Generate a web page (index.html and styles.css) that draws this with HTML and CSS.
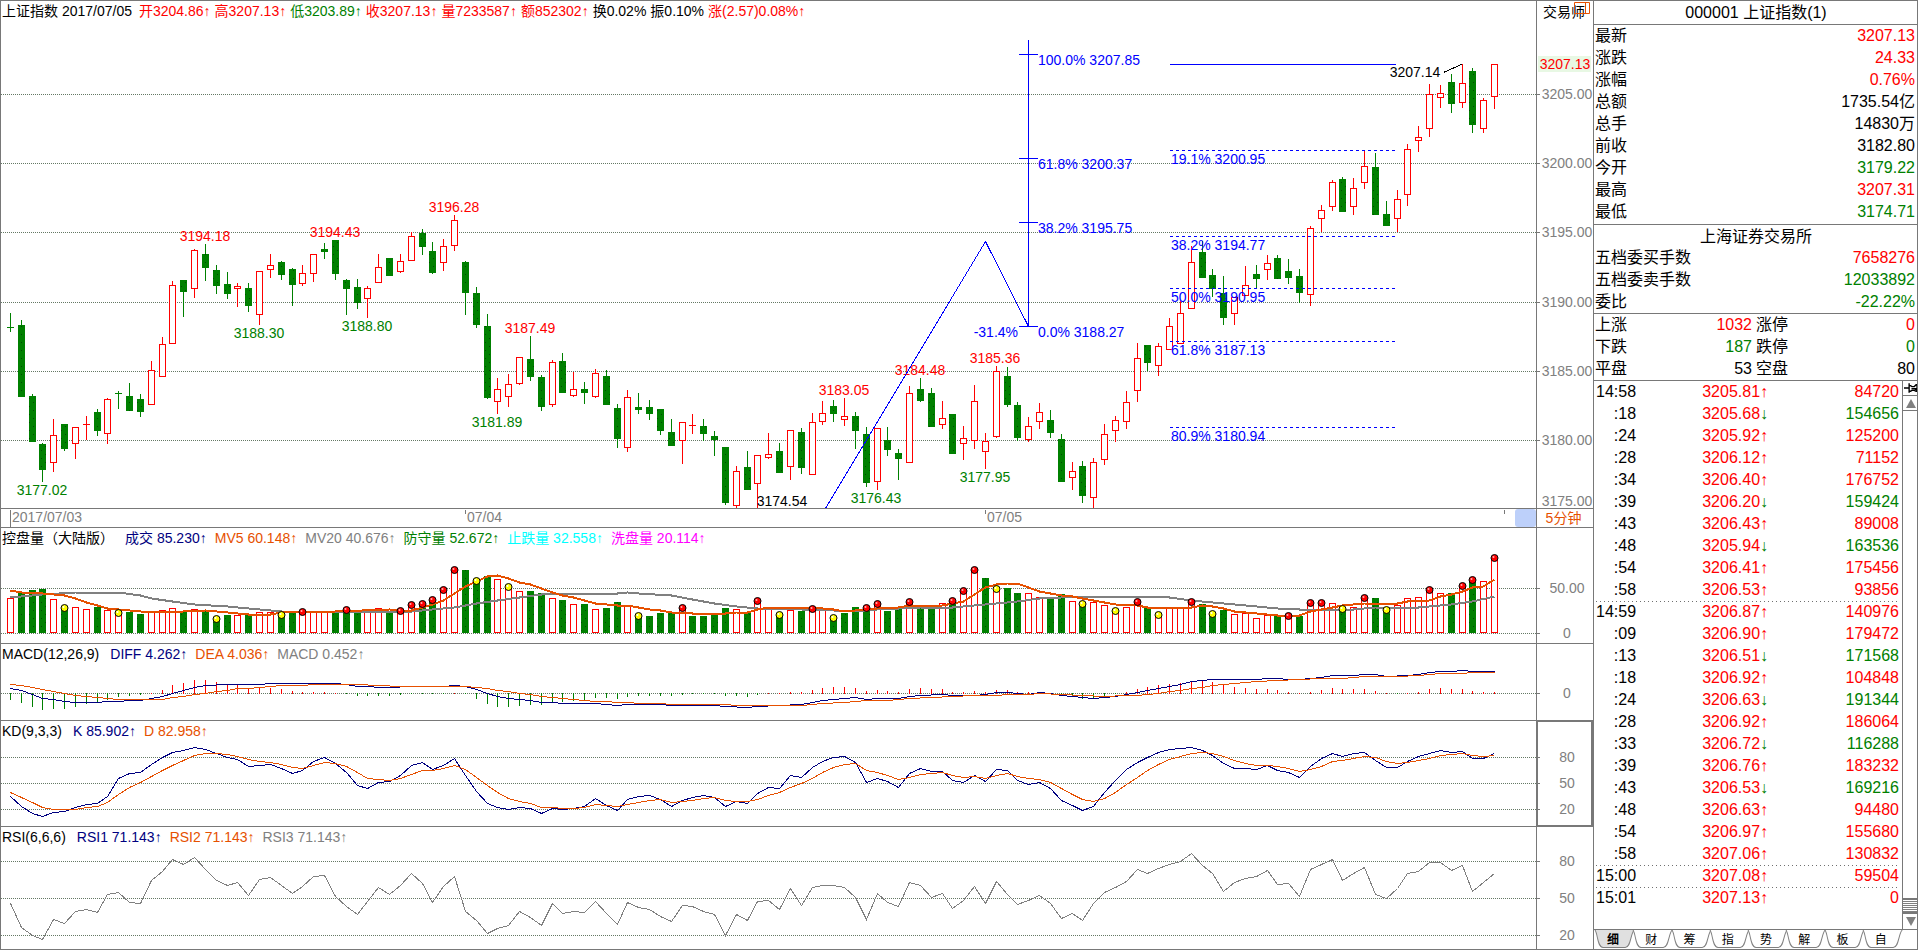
FILE: index.html
```html
<!DOCTYPE html>
<html lang="zh-CN">
<head>
<meta charset="utf-8">
<title>上证指数 000001</title>
<link rel="stylesheet" href="styles.css">
</head>
<body>
<div class="terminal">
  <main class="charts">
    <section class="panel" id="price" aria-label="K线">
      <svg class="plot"></svg>
      <header class="legend legend-main">
        <span class="symbol">上证指数 2017/07/05</span>
        <span class="up">开3204.86↑</span><span class="up">高3207.13↑</span><span class="down">低3203.89↑</span><span class="up">收3207.13↑</span><span class="up">量7233587↑</span><span class="up">额852302↑</span><span>换0.02%</span><span>振0.10%</span><span class="up">涨(2.57)0.08%↑</span>
      </header>
      <div class="brand">交易师
        <svg class="brand-icon" width="16" height="12" viewBox="0 0 16 12"><path d="M.5 .5H15.5V11.5H.5ZM11.5 .5V11.5"/></svg>
      </div>
    </section>
    <section class="panel" id="dates" aria-label="日期">
      <svg class="plot"></svg>
      <div class="date-thumb"></div>
      <button class="period" type="button">5分钟</button>
    </section>
    <section class="panel" id="volume" aria-label="成交量">
      <svg class="plot"></svg>
      <header class="legend">
        <span class="name">控盘量（大陆版）</span><span class="navy">成交 85.230↑</span><span class="orange">MV5 60.148↑</span><span class="gray">MV20 40.676↑</span><span class="down">防守量 52.672↑</span><span class="cyan">止跌量 32.558↑</span><span class="magenta">洗盘量 20.114↑</span>
      </header>
    </section>
    <section class="panel" id="macd" aria-label="MACD">
      <svg class="plot"></svg>
      <header class="legend">
        <span class="name">MACD(12,26,9)</span><span class="navy">DIFF 4.262↑</span><span class="orange">DEA 4.036↑</span><span class="gray">MACD 0.452↑</span>
      </header>
    </section>
    <section class="panel" id="kd" aria-label="KD">
      <svg class="plot"></svg>
      <header class="legend">
        <span class="name">KD(9,3,3)</span><span class="navy">K 85.902↑</span><span class="orange">D 82.958↑</span>
      </header>
      <div class="axis-focus"></div>
    </section>
    <section class="panel" id="rsi" aria-label="RSI">
      <svg class="plot"></svg>
      <header class="legend">
        <span class="name">RSI(6,6,6)</span><span class="navy">RSI1 71.143↑</span><span class="orange">RSI2 71.143↑</span><span class="gray">RSI3 71.143↑</span>
      </header>
    </section>
  </main>

  <aside class="quote">
    <h1 class="quote-title">000001 上证指数(1)</h1>
    <dl class="facts">
      <div><dt>最新</dt><dd class="up">3207.13</dd></div>
      <div><dt>涨跌</dt><dd class="up">24.33</dd></div>
      <div><dt>涨幅</dt><dd class="up">0.76%</dd></div>
      <div><dt>总额</dt><dd>1735.54亿</dd></div>
      <div><dt>总手</dt><dd>14830万</dd></div>
      <div><dt>前收</dt><dd>3182.80</dd></div>
      <div><dt>今开</dt><dd class="down">3179.22</dd></div>
      <div><dt>最高</dt><dd class="up">3207.31</dd></div>
      <div><dt>最低</dt><dd class="down">3174.71</dd></div>
    </dl>
    <section class="exchange">
      <h2>上海证券交易所</h2>
      <dl class="facts plain">
        <div><dt>五档委买手数</dt><dd class="up">7658276</dd></div>
        <div><dt>五档委卖手数</dt><dd class="down">12033892</dd></div>
        <div><dt>委比</dt><dd class="down">-22.22%</dd></div>
      </dl>
    </section>
    <dl class="facts breadth">
      <div><dt>上涨</dt><dd class="up">1032</dd></div><div><dt>涨停</dt><dd class="up">0</dd></div>
      <div><dt>下跌</dt><dd class="down">187</dd></div><div><dt>跌停</dt><dd class="down">0</dd></div>
      <div><dt>平盘</dt><dd>53</dd></div><div><dt>空盘</dt><dd>80</dd></div>
    </dl>
    <div class="ticks">
      <div class="tick-list">
        <table class="tick-table"><tbody id="ticks"></tbody></table>
      </div>
      <div class="scroll">
        <button type="button" aria-label="固定"><svg width="14" height="12" viewBox="0 0 15 12"><path d="M0 6H5M5.500 1V11M5.500 3.500H7L8.500 4.500H11L13 2.500H14V9.500H13L11 8.500H8.500L7 9.500H5.500" fill="none" stroke="#000" stroke-width="1.500"/><path d="M8 6H14V9H13L11 7.500H8Z"/></svg></button>
        <button type="button" aria-label="向上"><svg width="10" height="9" viewBox="0 0 10 9"><path d="M5 0L10 9H0Z" fill="#808080"/></svg></button>
        <div class="track"><div class="thumb"></div></div>
        <button type="button" aria-label="向下"><svg width="10" height="9" viewBox="0 0 10 9"><path d="M5 9L10 0H0Z" fill="#808080"/></svg></button>
      </div>
    </div>
    <nav class="tabs" id="tabs"></nav>
  </aside>
</div>
<script src="chart.js"></script>
</body>
</html>
```
FILE: styles.css
```css
* { box-sizing: border-box; }

:root {
  --line: #787878;
  --up: #ff0000;
  --down: #008000;
  --navy: #000080;
  --orange: #e65000;
  --gray: #808080;
  --axis: 57px;
}

html, body { height: 100%; }

body {
  margin: 0;
  background: #fff;
  color: #000;
  font: 14px/16px "Liberation Sans", "Noto Sans CJK SC", sans-serif;
}

button {
  margin: 0;
  padding: 0;
  border: 0;
  background: none;
  color: inherit;
  font: inherit;
}

.terminal {
  display: flex;
  height: 100vh;
  outline: 1px solid var(--line);
  outline-offset: -1px;
  border-bottom: 1px solid #000;
  overflow: hidden;
}

.up { color: var(--up); }
.down { color: var(--down); }
.navy { color: var(--navy); }
.orange { color: var(--orange); }
.gray { color: var(--gray); }
.cyan { color: #00ffff; }
.magenta { color: #ff00ff; }

/* Charts */
.charts {
  flex: 1;
  min-width: 0;
  display: grid;
  grid-template-rows: minmax(0, 509fr) 19px minmax(0, 116fr) minmax(0, 77fr) minmax(0, 106fr) minmax(0, 122fr);
}

.panel {
  position: relative;
  border-bottom: 1px solid var(--line);
}

#rsi { border-bottom: 0; }

.plot {
  position: absolute;
  inset: 0;
  width: 100%;
  height: 100%;
}

.legend {
  position: relative;
  display: flex;
  gap: 8px;
  padding: 2px 60px 0 2px;
  white-space: nowrap;
}

.legend .name { margin-right: 3px; }

.legend-main {
  gap: 4px;
  padding-top: 3px;
}

.legend-main .symbol { margin-right: 3px; }

.brand {
  position: absolute;
  top: 4px;
  right: 0;
  width: var(--axis);
  padding-left: 7px;
}

.brand-icon {
  position: absolute;
  top: -2px;
  right: 3px;
}

.brand-icon path {
  fill: none;
  stroke: var(--orange);
}

.period {
  position: absolute;
  inset: 0 0 0 auto;
  width: var(--axis);
  padding-right: 2px;
  color: var(--orange);
}

.date-thumb {
  position: absolute;
  inset: 0 var(--axis) 0 auto;
  width: 21px;
  border-radius: 3px;
  background: #bdd0fa;
}

.axis-focus {
  position: absolute;
  inset: -1px 0 -1px auto;
  width: var(--axis);
  border: 2px solid var(--line);
}

.plot text { font-size: 14px; white-space: pre; }
.plot .wick, .plot .rule, .plot .grid, .plot .body, .plot .curve { shape-rendering: crispEdges; fill: none; }
.plot .grid { stroke: #647864; stroke-dasharray: 1 1; }
.plot .rule { stroke: var(--line); }
.plot .wick.up, .plot .body.up { stroke: var(--up); }
.plot .wick.down { stroke: var(--down); }
.plot .body.up { fill: #fff; }
.plot .body.down { fill: url(#hatch); }
.plot .fill-up { fill: var(--up); }
.plot .fill-down { fill: var(--down); }
.plot .fill-gray { fill: var(--gray); }
.plot .fill-blue { fill: #0000ff; }
.plot .fill-black { fill: #000; }
.plot .blue { stroke: #0000ff; }
.plot .dashed { stroke-dasharray: 3 3; }
.plot .black { stroke: #000; }
.plot .curve.navy { stroke: var(--navy); }
.plot .curve.orange { stroke: var(--orange); }
.plot .curve.gray { stroke: var(--gray); }
.plot .curve.bold { stroke-width: 2; }
.plot .last { fill: #e8f8e4; }

/* Quote */
.quote {
  width: 325px;
  display: flex;
  flex-direction: column;
  border-left: 1px solid var(--line);
  font-size: 16px;
  line-height: 22px;
}

.quote h1, .quote h2 {
  margin: 0;
  font-size: 16px;
  font-weight: 400;
  text-align: center;
}

.quote-title {
  padding: 2px 0 0;
  border-bottom: 1px solid var(--line);
}

.exchange { padding-top: 2px; }
.exchange h2 { line-height: 20px; }

.facts {
  margin: 0;
  padding-bottom: 1px;
  border-bottom: 1px solid var(--line);
}

.facts > div {
  display: flex;
  justify-content: space-between;
  padding: 0 3px 0 1px;
}

.facts dd { margin: 0; }

.facts.plain { padding-bottom: 0; }

.breadth {
  display: grid;
  grid-template-columns: 161fr 163fr;
  padding-bottom: 0;
}

.ticks {
  flex: 1;
  min-height: 0;
  display: flex;
  border-bottom: 1px solid var(--line);
}

.tick-list {
  flex: 1;
  overflow: hidden;
  padding: 0 3px 0 2px;
}

.tick-table {
  width: 100%;
  border-spacing: 0;
}

.tick-table td {
  height: 22px;
  padding: 0;
  text-align: right;
}

.tick-table .time { width: 40px; }
.tick-table .price { width: 124px; }
.tick-table .arrow { width: 8px; }
.tick-table .mark { background: repeating-linear-gradient(90deg, #707070 0 1px, #fff 1px 4px) top / 100% 1px no-repeat; }

.scroll {
  width: 16px;
  display: flex;
  flex-direction: column;
  border-left: 1px solid var(--line);
}

.scroll button {
  height: 15px;
  display: grid;
  place-items: center;
  border-bottom: 1px solid var(--line);
}

.scroll button:last-child { border-bottom: 0; }

.track {
  flex: 1;
  display: flex;
  align-items: flex-end;
}

.thumb {
  width: 100%;
  height: 16px;
  border: solid var(--line);
  border-width: 2px 0;
  background: repeating-linear-gradient(#fff 0 1px, #808080 1px 2px);
}

.tabs {
  display: flex;
  height: 19px;
  padding-right: 18px;
}

.tab {
  position: relative;
  flex: 1;
  font-size: 12px;
  line-height: 18px;
}

.tab svg {
  position: absolute;
  top: 0;
  left: 0;
  width: calc(100% + 3px);
  height: 19px;
}

.tab path { fill: #fff; stroke: #808080; }
.tab span { position: relative; }
.tab.active { font-weight: 700; }
.tab.active path { fill: #e0e0e0; }
```
FILE: chart.js
```js
const NS = 'http://www.w3.org/2000/svg';
const AXIS = 57;
const BASE_WIDTH = 1536;
const STEP = 10.833;

/* One candle each: direction, body top, body bottom, high, low */
const candles = `
g327,328,313,332 g325,397,320,397 g396,442,394,442 g444,470,443,482 r435,462,419,472 g424,449,424,451
r427,443,427,459 r424,425,416,440 g412,431,409,436 r399,433,398,444 g393,394,391,409 g396,411,383,411
g399,412,394,417 r370,404,361,405 r344,376,337,376 r285,343,281,343 g280,292,280,317 r250,288,249,298
g254,268,244,281 g270,286,265,294 g284,294,272,299 r286,288,283,307 g288,306,283,312 r271,314,271,325
r265,269,254,278 g262,275,261,280 g269,285,268,306 r273,283,265,286 r254,273,254,282 g249,252,243,259
g240,274,240,280 g280,289,279,315 g287,303,279,309 r288,298,286,318 r267,282,254,283 g258,276,258,276
r261,271,254,273 r236,260,232,261 g233,247,229,255 g251,273,242,274 r246,262,239,271 r220,245,215,251
g262,293,261,315 g293,325,287,328 g326,398,314,399 r389,401,378,414 r384,396,374,407 r357,383,357,385
g359,377,336,381 g377,407,375,411 r362,404,360,407 g361,393,353,393 r389,395,372,397 g389,393,382,404
r373,396,369,398 g376,405,370,405 g408,439,404,448 r397,447,390,452 g407,410,393,414 g407,414,400,420
g409,431,409,435 g432,446,419,446 r422,440,422,464 r425,426,414,434 g426,434,419,441 g436,440,431,456
g447,503,447,505 r471,505,466,508 g467,490,451,490 r455,483,455,508 r454,457,433,459 g451,473,443,473
r430,466,430,480 g432,468,428,474 r422,474,413,474 r413,421,401,425 g406,414,400,422 r416,419,398,426
g416,431,412,449 g434,483,427,487 r428,481,428,490 g440,450,427,456 g453,459,449,480 r393,462,386,463
g389,401,378,402 g393,427,388,427 r418,424,401,429 g414,454,414,454 r438,443,426,460 r401,440,385,449
r441,451,433,469 r371,436,366,438 g376,405,367,407 g405,438,402,441 r426,439,417,442 r412,421,403,429
g420,433,410,438 g439,482,434,482 r471,477,462,490 g466,496,461,503 r462,497,458,508 r434,459,424,465
r420,430,416,442 r402,421,391,429 r358,390,343,402 g345,363,345,371 r346,365,343,376 r326,349,318,349
r313,343,300,343 r262,308,246,308 g252,278,241,278 g275,289,269,297 g293,318,276,325 r297,313,297,325
r285,295,266,296 g274,279,265,288 r263,269,255,280 g258,279,255,279 g271,278,259,284 g276,293,269,303
r228,294,226,306 r210,218,205,232 r182,206,180,211 g179,212,177,212 r188,206,178,215 r166,182,151,189
g167,215,153,215 g214,226,201,226 r199,218,190,232 r149,194,144,206 r137,140,126,152 r94,128,84,137
r93,97,85,108 g82,104,74,113 r83,102,64,108 g71,125,68,133 r100,128,98,133 r64,96,64,109
`.trim().split(/\s+/).map(s => [s[0], ...s.slice(1).split(',').map(Number)]);

/* Indicator levels are in thirds of a pixel below this line */
const LEVEL_TOP = 515;
const level = v => LEVEL_TOP + v / 3;

/* Volume: direction, level, optional marker (R red ball, Y yellow ball) */
const volumes = `
r250 g234 g225 g222 r253 g279Y r277 r283 g276 r286 r294Y g291 g297 r290 r286 r280 g290 r283 g288 g312Y
g300 r301 g300 r292 r292 g300Y g291 r291R r291 r291 g291 g285R g291 r286 r280 g288 r288R r270R g267R g255R
r225R r165R g165 g198Y g183 r193 r216Y r229 g228 g234 r250 g255 r268 g267 r283 g279 g261 r271 g303Y g303
g294 g292 r279R g303 g303 g295 g279 r283 g291 r258R r283 g300Y r286 g288 r282R r286 g309Y g294 g276 g279R
r267R g288 g280 r261R g276 g276 r265 g258R r228R r165R g189 r222Y g219 g234 r235 r247 g250 g237 r259 g267Y
r262 r271 r288Y r277 r261R g279 r300Y r280 r280 r261R g267 g297Y g285 r298 r295 r310 r300 g303 r303R g303
r264R r264R r265 g282Y r277 r249R g249 g285Y r271 r250 r247 r225R r235 g234 r213R g195R r199 r129R
`.trim().split(/\s+/);

const list = s => s.trim().split(/\s+/).map((v, i) => [i, Number(v)]);
const pairs = s => s.trim().split(/\s+/).map(p => p.split(':').map(Number));

const mv5 = pairs(`0:227 1:232 3:234 4:238 5:240 6:250 7:262 8:270 9:280 10:283 11:286 12:288 14:291 16:288 18:286 20:291
22:297 24:297 25:292 30:289 35:283 36:286 37:286 38:276 39:268 40:257 41:234 42:213 43:200 44:184 45:180 46:190 47:202
48:208 49:219 50:231 51:241 52:247 53:256 54:265 55:269 56:270 57:272 58:276 59:283 60:286 61:291 63:294 66:294 67:291
68:291 69:282 70:278 74:278 76:283 77:288 79:284 80:280 82:276 83:270 85:274 86:271 87:265 88:260 89:237 90:217 91:207
92:204 93:204 94:218 95:228 97:240 98:244 99:250 100:256 101:262 102:269 104:270 105:276 109:276 110:272 111:275
112:279 113:289 115:296 117:300 119:300 120:288 121:282 122:276 123:271 125:265 128:264 129:260 131:255 132:245
133:238 134:230 135:217 136:213 137:192`);

const mv20 = pairs(`0:246 2:240 3:237 6:232 10:233 12:241 13:250 15:259 17:267 20:274 23:284 25:288 30:290 35:288 37:288
39:282 41:276 43:265 45:255 47:246 49:239 51:234 56:234 57:231 58:234 61:241 63:254 65:265 67:274 69:279 73:283 76:286
78:288 80:283 84:278 87:278 89:271 91:265 93:258 95:250 97:246 99:243 106:243 107:247 109:255 111:262 113:268 115:275
117:281 119:282 124:282 126:278 130:278 132:270 133:268 135:260 137:245`);

const macdBars = list(`555 564 576 585 582 582 576 567 564 556 546 543 539 534 525 510 504 495 495 501 507 510 519 518
519 522 528 531 531 531 533 537 543 543 543 543 540 536 537 538 537 533 537 552 567 576 576 573 570 570 564 561 558 556
549 549 552 546 543 543 543 543 540 537 537 537 543 543 546 540 535 535 531 531 525 519 516 516 519 528 525 528 531 522
519 522 522 531 531 528 531 525 525 531 532 531 534 541 545 552 549 543 537 531 522 516 510 507 504 498 496 501 510 516
519 522 522 525 531 535 531 525 519 522 522 522 528 535 537 533 531 522 519 522 522 528 531 531`);

const diff = pairs(`0:520 1:526 2:537 3:550 4:553 5:559 6:562 8:562 9:559 12:556 13:550 14:544 15:535 16:526 17:517
18:511 20:508 23:508 24:505 30:505 31:508 32:514 35:517 37:514 40:514 41:511 42:515 43:523 44:535 45:544 46:550 47:553
48:556 49:562 50:563 51:566 54:566 55:567 56:571 57:568 60:568 61:571 65:571 66:574 68:577 69:574 71:571 73:568 74:562
75:556 76:553 77:550 78:547 79:553 80:550 82:550 83:544 84:541 86:538 87:541 89:541 90:538 91:532 92:532 93:535 94:537
95:532 96:535 97:541 98:545 99:548 100:551 101:547 102:544 103:538 104:532 105:526 106:520 107:514 108:508 109:500
110:496 111:493 115:493 116:490 117:490 118:493 119:493 120:490 121:487 122:481 124:481 125:478 126:478 127:484
129:481 130:478 131:472 132:469 133:469 134:466 135:469 137:469`);

const dea = pairs(`0:508 1:511 2:517 3:523 4:529 5:535 6:541 7:544 8:547 9:550 10:553 14:553 15:547 16:544 17:538 18:535
19:529 20:526 21:520 22:520 24:514 25:511 30:508 32:508 34:511 36:514 42:514 43:517 44:520 45:526 46:529 47:534 48:538
49:544 50:547 51:550 52:553 53:556 54:559 55:559 56:562 59:565 62:568 66:568 67:571 73:571 74:568 75:565 77:562 79:556
81:556 82:553 83:550 85:547 87:544 89:541 91:541 92:538 94:538 95:535 97:537 99:541 101:544 103:541 104:541 105:538
106:534 107:529 108:526 109:520 110:517 111:511 112:508 113:505 115:499 117:496 119:493 121:490 123:489 125:484
128:484 130:482 132:475 134:475 135:472 137:472`);

const kLine = list(`844 875 894 905 893 889 877 869 865 844 791 775 772 747 727 712 706 698 704 715 727 734 754 751 748
759 775 766 738 727 745 772 810 820 803 798 781 751 742 763 750 731 781 829 865 878 883 877 881 895 880 884 881 874 850
870 885 853 844 841 854 873 856 847 841 846 874 859 865 835 817 821 781 787 757 739 727 724 742 802 790 799 817 776 760
769 769 796 802 782 799 763 766 796 808 802 819 856 871 886 873 832 795 763 742 728 711 703 700 697 706 720 745 760 760
763 752 766 772 788 755 731 715 723 715 712 736 757 757 738 724 715 706 712 709 729 730 715`);

const dLine = list(`832 847 862 878 884 884 884 878 874 861 838 818 802 784 767 750 735 722 715 715 718 724 734 739 742
748 757 760 751 742 745 755 771 790 793 797 790 778 766 765 759 751 762 786 812 832 850 859 866 877 878 881 880 878 868
871 874 868 862 857 853 862 858 856 850 847 856 859 859 853 841 832 817 805 790 773 757 749 745 766 772 781 793 787 778
774 772 782 787 785 790 781 776 785 790 793 802 821 838 853 859 850 833 808 787 766 749 733 724 715 712 715 725 736 745
751 751 755 761 769 763 755 739 736 730 724 728 738 745 742 736 730 721 718 715 721 724 721`);

const rsiLine = list(`1164 1237 1260 1273 1213 1225 1190 1184 1192 1139 1132 1161 1165 1096 1069 1033 1048 1028 1063 1096
1111 1102 1140 1094 1087 1112 1135 1114 1085 1081 1144 1173 1197 1158 1118 1137 1112 1075 1104 1161 1113 1085 1189 1216
1255 1240 1231 1189 1208 1230 1165 1195 1189 1192 1159 1195 1227 1162 1177 1184 1204 1219 1171 1175 1190 1198 1262 1198
1215 1160 1156 1183 1120 1171 1117 1111 1111 1117 1146 1213 1136 1162 1174 1102 1111 1148 1135 1180 1157 1114 1164 1100
1138 1168 1156 1140 1165 1211 1195 1216 1166 1133 1117 1099 1063 1076 1061 1049 1039 1016 1050 1075 1129 1103 1090 1083
1066 1108 1105 1144 1063 1048 1033 1096 1076 1058 1137 1150 1120 1076 1069 1043 1042 1066 1050 1129 1103 1076`);

function painter(id, top, height) {
  const panel = document.getElementById(id);
  const svg = panel.querySelector('.plot');
  svg.replaceChildren();
  const width = panel.clientWidth - AXIS;
  const sx = width / BASE_WIDTH;
  const sy = panel.offsetHeight / height;
  const X = x => Math.floor(x * sx);
  const Y = y => Math.round((y - top) * sy);
  const add = (tag, cls, attrs, text) => {
    const el = document.createElementNS(NS, tag);
    el.setAttribute('class', cls);
    for (const k in attrs) el.setAttribute(k, attrs[k]);
    if (text) el.textContent = text;
    svg.append(el);
    return el;
  };
  const px = i => X(10.4 + STEP * i);
  const line = (cls, points) => add('polyline', cls, {
    points: points.map(([x, y]) => `${X(x) + 0.5},${Y(y) + 0.5}`).join(' ')
  });
  const curve = (cls, points) => add('polyline', 'curve ' + cls, {
    points: points.map(([i, v]) => `${px(i) + 0.5},${Y(Math.floor(level(v))) + 0.5}`).join(' ')
  });
  const text = (cls, x, y, s, anchor = 'start') =>
    add('text', cls, { x: X(x), y: Y(y) + 5, 'text-anchor': anchor }, s);
  const grid = y => add('path', 'grid', { d: `M1 ${Y(y) + 0.5}H${width}` });
  const axis = (y, s, labelY = y) => {
    add('path', 'rule', { d: `M${width} ${Y(y) + 0.5}h4` });
    add('text', 'fill-gray', { x: width + 31, y: Y(labelY) + 5, 'text-anchor': 'middle' }, s);
  };
  const body = (dir, x, y1, y2) => {
    if (dir === 'g') add('rect', 'body down', { x: x - 3, y: y1, width: 7, height: Math.max(1, y2 - y1) });
    else if (y2 - y1 < 2) add('path', 'wick up', { d: `M${x - 3} ${y1 + 0.5}h7` });
    else add('rect', 'body up', { x: x - 2.5, y: y1 + 0.5, width: 6, height: y2 - y1 });
  };
  add('path', 'rule', { d: `M${width + 0.5} 0V${panel.offsetHeight}` });
  return { add, px, X, Y, line, curve, text, grid, axis, body, width };
}

function drawPrice() {
  const p = painter('price', 0, 509);
  const defs = p.add('defs', '', {});
  defs.innerHTML = '<pattern id="hatch" width="8" height="8" patternUnits="userSpaceOnUse"><rect width="8" height="8" fill="#008000"/><path d="M1 2h1v1h-1zM5 6h1v1h-1z" fill="#004c00"/></pattern>';
  [94, 163, 232, 302, 371, 440].forEach((y, i) => {
    p.grid(y);
    p.axis(y, (3205 - 5 * i).toFixed(2));
  });
  p.add('text', 'fill-gray', { x: p.width + 31, y: p.Y(501) + 5, 'text-anchor': 'middle' }, '3175.00');
  p.add('rect', 'last', { x: p.width + 2, y: p.Y(64) - 8, width: 53, height: 16 });
  p.add('text', 'fill-up', { x: p.width + 29, y: p.Y(64) + 5, 'text-anchor': 'middle' }, '3207.13');

  candles.forEach(([dir, top, bottom, high, low], i) => {
    const x = p.px(i);
    const wick = dir === 'r' ? 'wick up' : 'wick down';
    p.add('path', wick, { d: `M${x + 0.5} ${p.Y(high)}V${p.Y(low)}` });
    p.body(dir, x, p.Y(top), p.Y(bottom));
  });
  /* Flat opening bar keeps its full-height wick and a wide tick */
  [[0, 327], [10, 393]].forEach(([i, y]) => p.add('path', 'wick down', { d: `M${p.px(i) - 3} ${p.Y(y) + 0.5}h7` }));

  [['up', 205, 236, '3194.18'], ['down', 259, 333, '3188.30'], ['up', 335, 232, '3194.43'], ['down', 367, 326, '3188.80'],
   ['up', 454, 207, '3196.28'], ['down', 42, 490, '3177.02'], ['down', 497, 422, '3181.89'], ['up', 530, 328, '3187.49'],
   ['black', 782, 501, '3174.54'], ['up', 844, 390, '3183.05'], ['down', 876, 498, '3176.43'], ['up', 920, 370, '3184.48'],
   ['up', 995, 358, '3185.36'], ['down', 985, 477, '3177.95'], ['black', 1415, 72, '3207.14']]
    .forEach(([c, x, y, s]) => p.text('fill-' + c, x, y, s, 'middle'));
  p.line('curve black', [[1443, 72], [1461, 64]]);

  p.line('curve blue', [[825, 508], [985, 241], [1028, 326]]);
  p.line('curve blue', [[1028, 39], [1028, 326]]);
  [[54, '100.0% 3207.85'], [158, '61.8% 3200.37'], [222, '38.2% 3195.75'], [326, '0.0% 3188.27']].forEach(([y, s]) => {
    p.line('curve blue', [[1018, y], [1037, y]]);
    p.text('fill-blue', 1038, y + 6, s);
  });
  p.text('fill-blue', 1018, 332, '-31.4%', 'end');
  p.line('curve blue', [[1169, 64], [1395, 64]]);
  [[150, '19.1% 3200.95'], [236, '38.2% 3194.77'], [288, '50.0% 3190.95'], [341, '61.8% 3187.13'], [427, '80.9% 3180.94']].forEach(([y, s]) => {
    p.line('curve blue dashed', [[1169, y], [1395, y]]);
    p.text('fill-blue', 1171, y + 9, s);
  });
}

function drawDates() {
  const p = painter('dates', 0, 19);
  p.line('curve rule', [[10, 0], [10, 19]]);
  [465, 985, 1504].forEach(x => p.line('curve rule', [[x, 0], [x, 4]]));
  p.text('fill-gray', 12, 8, '2017/07/03');
  p.text('fill-gray', 467, 8, '07/04');
  p.text('fill-gray', 987, 8, '07/05');
}

function drawVolume() {
  const p = painter('volume', 528, 116);
  [[588, '50.00'], [633, '0']].forEach(([y, s]) => { p.grid(y); p.axis(y, s); });
  const bars = volumes.map(s => ({ dir: s[0], y: level(parseInt(s.slice(1), 10)), ball: s[4] }));
  bars.forEach((b, i) => p.body(b.dir, p.px(i), p.Y(Math.floor(b.y)), p.Y(b.dir === 'g' ? 633 : 632)));
  p.curve('gray bold', mv20);
  p.curve('orange bold', mv5);
  bars.forEach((b, i) => {
    if (!b.ball) return;
    const cx = p.px(i) + 0.5, cy = p.Y(Math.round(b.y));
    p.add('circle', 'ball', { cx, cy, r: 3.5, fill: b.ball === 'R' ? '#ff0000' : '#ffff00', stroke: '#000' });
    p.add('circle', 'shine', { cx: cx - 1, cy: cy - 1, r: 1, fill: b.ball === 'R' ? '#ffb0b0' : '#ffffff' });
  });
}

function drawMacd() {
  const p = painter('macd', 644, 77);
  p.grid(693);
  p.axis(693, '0');
  macdBars.forEach(([i, v]) => {
    const y = Math.round(level(v)), up = v < 536;
    p.add('path', up ? 'wick up' : 'wick down', { d: `M${p.px(i) + 0.5} ${p.Y(up ? y : 693)}V${p.Y(up ? 694 : y)}` });
  });
  p.curve('navy', diff);
  p.curve('orange', dea);
}

function drawKd() {
  const p = painter('kd', 721, 106);
  [[757, '80'], [783, '50'], [809, '20']].forEach(([y, s]) => { p.grid(y); p.axis(y, s); });
  p.curve('navy', kLine);
  p.curve('orange', dLine);
}

function drawRsi() {
  const p = painter('rsi', 827, 122);
  [[861, '80'], [898, '50'], [935, '20']].forEach(([y, s]) => { p.grid(y); p.axis(y, s); });
  p.curve('gray', rsiLine);
}

function draw() {
  drawPrice();
  drawDates();
  drawVolume();
  drawMacd();
  drawKd();
  drawRsi();
}

const ticks = `14:58 3205.81 84720 +|:18 3205.68 154656 -|:24 3205.92 125200 +|:28 3206.12 71152 +|:34 3206.40 176752 +
:39 3206.20 159424 -|:43 3206.43 89008 +|:48 3205.94 163536 -|:54 3206.41 175456 +|:58 3206.53 93856 +
14:59 3206.87 140976 +|:09 3206.90 179472 +|:13 3206.51 171568 -|:18 3206.92 104848 +|:24 3206.63 191344 -
:28 3206.92 186064 +|:33 3206.72 116288 -|:39 3206.76 183232 +|:43 3206.53 169216 -|:48 3206.63 94480 +
:54 3206.97 155680 +|:58 3207.06 130832 +|15:00 3207.08 59504 +|15:01 3207.13 0 +`.split(/[|\n]/);

document.getElementById('ticks').innerHTML = ticks.map((row, i) => {
  const [time, price, volume, sign] = row.split(' ');
  const cls = sign === '+' ? 'up' : 'down';
  const mark = i > 0 && time[0] !== ':' ? ' class="mark"' : '';
  return `<tr${mark}><td class="time">${time}</td><td class="price up">${price}</td><td class="arrow ${cls}">${sign === '+' ? '↑' : '↓'}</td><td class="${cls}">${volume}</td></tr>`;
}).join('');

document.getElementById('tabs').innerHTML = [...'细财筹指势解板自'].map((name, i) =>
  `<button type="button" class="tab${i ? '' : ' active'}"><svg viewBox="0 0 41 19" preserveAspectRatio="none"><path d="M1 0C4 4 3 17 9 17.500H31C37 17 36 4 40 0"/></svg><span>${name}</span></button>`).join('');

draw();
addEventListener('resize', draw);
```
